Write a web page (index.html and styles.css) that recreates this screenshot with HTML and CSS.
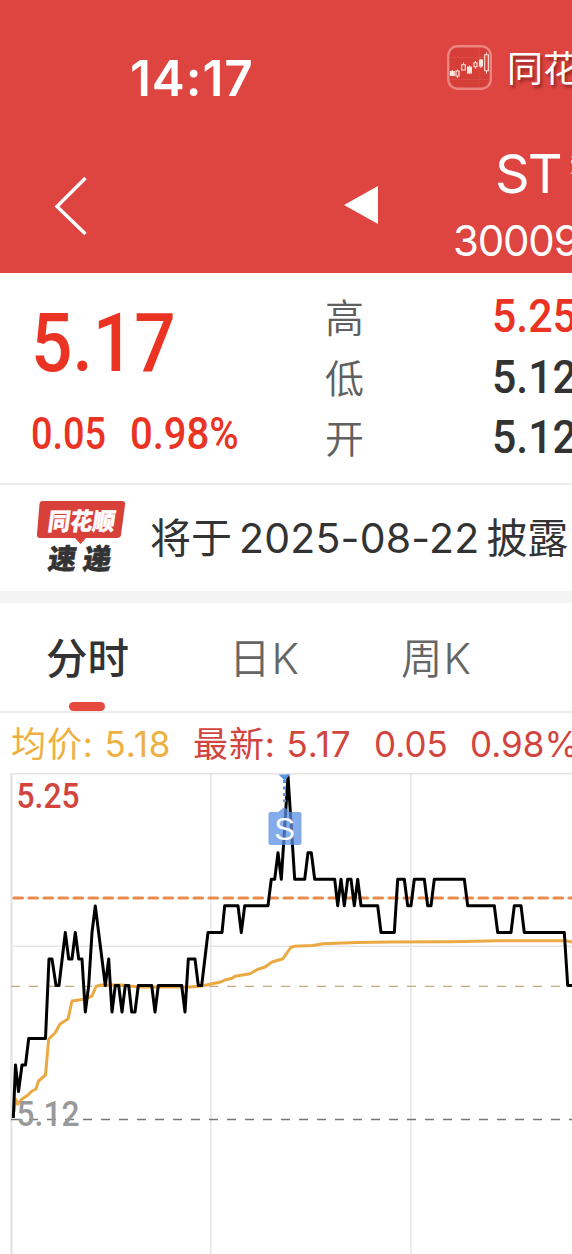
FILE: index.html
```html
<!DOCTYPE html>
<html lang="zh-CN">
<head>
    <meta charset="UTF-8">
    <meta name="viewport" content="width=device-width, initial-scale=1.0">
    <title>ST 30009</title>
    <link rel="stylesheet" href="styles.css">
</head>
<body>
    <header class="header">
        <div class="status-bar">
            <span class="time">14:17</span>
            <svg class="app-icon" width="45" height="45" viewBox="0 0 45 45">
                <rect x="1.2" y="1.2" width="42.6" height="42.6" rx="9.5" fill="#d63f38" stroke="#ec8580" stroke-width="2.4"/>
                <path d="M3 12.500H42M3 34.500H42M32 3V42" stroke="#dc524b" stroke-width="0.700"/>
                <g fill="#fbe9e0">
                    <rect x="2.800" y="26" width="5" height="5"/>
                    <rect x="20" y="21.500" width="5" height="7"/>
                    <rect x="32" y="14.500" width="4" height="7"/>
                </g>
                <path d="M5.300 25v6M22.500 20.500v8M34 14v9M10.500 24.500v1.500M10.500 31v2M16.500 17.500v2M28.500 16v1.500M28.500 22v2M39.500 7.500v2M39.500 26v2.500" stroke="#fbe9e0" stroke-width="1"/>
                <path d="M9 26h3v5h-3zM14.700 19.700h3.600v5.300h-3.600zM27 17.700h3v4h-3zM37.700 9.700h3.600v16h-3.600z" fill="none" stroke="#fbe9e0" stroke-width="1.100"/>
            </svg>
            <span class="app-name">同花</span>
        </div>
        <div class="nav-bar">
            <svg class="back" width="36" height="62" viewBox="0 0 36 62">
                <path d="M32.500 3L4 31.500L32.500 59" fill="none" stroke="#fff" stroke-width="3.400"/>
            </svg>
            <svg class="prev" width="34" height="38" viewBox="0 0 34 38">
                <path d="M34 0V38L0 19Z" fill="#fff"/>
            </svg>
            <div class="stock">
                <div class="stock-name">ST<span class="stock-cn">智</span></div>
                <div class="stock-code">30009</div>
            </div>
        </div>
    </header>

    <section class="quote">
        <div class="price">
            <div class="price-now num">5.17</div>
            <div class="price-change"><span class="num">0.05</span><span class="num percent">0.98%</span></div>
        </div>
        <div class="stats">
            <div class="stat"><span class="label">高</span><span class="value num up">5.25</span></div>
            <div class="stat"><span class="label">低</span><span class="value num">5.12</span></div>
            <div class="stat"><span class="label">开</span><span class="value num">5.12</span></div>
        </div>
    </section>

    <section class="news">
        <svg class="news-logo" width="90" height="76" viewBox="36 499 90 76">
            <path d="M42 501H122Q126 501 125 505L121 535Q120.500 538 117 538H86L80.500 544L75 538H40Q36.500 538 37 534L39.500 504Q40 501 42 501Z" fill="#d8413a"/>
            <g font-family="Noto Sans CJK SC" font-weight="900">
                <text transform="translate(47 529.500) skewX(-8)" font-size="24" textLength="67" lengthAdjust="spacingAndGlyphs" fill="#fff" stroke="#fff" stroke-width="0.400">同花顺</text>
                <g fill="#333" stroke="#333" stroke-width="0.600">
                    <text transform="translate(47 569) skewX(-8)" font-size="28" textLength="28" lengthAdjust="spacingAndGlyphs">速</text>
                    <text transform="translate(82 569) skewX(-8)" font-size="28" textLength="28" lengthAdjust="spacingAndGlyphs">递</text>
                </g>
            </g>
        </svg>
        <div class="news-text">将于<span class="date">2025-08-22</span>披露</div>
    </section>

    <nav class="tabs">
        <div class="tab active">分时</div>
        <div class="tab">日<span class="k">K</span></div>
        <div class="tab">周<span class="k">K</span></div>
    </nav>

    <div class="legend">
        <span class="avg">均价: 5.18</span>
        <span class="last">最新: 5.17</span>
        <span class="change">0.05</span>
        <span>0.98%</span>
    </div>

    <svg class="chart" width="572" height="484" viewBox="0 770 572 484">
        <!-- grid -->
        <g stroke="#e6e6e6" fill="none">
            <path d="M11.500 773V1254" stroke-width="2.500"/>
            <path d="M11 773.800H572M11 946.300H572M210.800 773V1254M410.900 773V1254" stroke-width="1.500"/>
        </g>
        <path d="M14 898H572" stroke="#e98b4a" stroke-width="3.200" stroke-dasharray="8.500 6.500" stroke-linecap="round"/>
        <path d="M11 986.400H572" stroke="#c2ab7c" stroke-width="1.400" stroke-dasharray="9 9"/>
        <path d="M11 1119.600H572" stroke="#777" stroke-width="1.500" stroke-dasharray="9 9"/>

        <!-- average price -->
        <polyline fill="none" stroke="#eba943" stroke-width="3" stroke-linejoin="round" points="14,1112 15.500,1099 18,1104 22,1099 28,1095 32,1091 36,1089 38.500,1081 45.500,1075 48.700,1039 55,1033 60,1024 68,1019 72,1001 85,999 92,996 96,986.500 101,985 122,985 138,987 190,987 202,986 211,984 220.700,982 225,980 232,978.300 235,976.300 250,973.700 257,969.700 265,967 272,962 283,958.700 290.700,947.500 294,946.300 313,945.500 323,943.700 357,942.600 390,942 450,941.800 500,940.800 566,940.800 572,942"/>

        <!-- price -->
        <polyline fill="none" stroke="#000" stroke-width="3" stroke-linejoin="round" points="13.3,1118 15.500,1065 18.500,1091.500 22,1065 25.500,1065 28.700,1038.500 45.500,1038.500 49,959 52,959 56,985.500 59,985.500 65.300,932.500 68.700,959 72,959 75.300,932.500 78.700,959 82,959 85.300,1012 88.700,985.500 92,932.500 95.300,906 105.300,985.500 108.700,959 112,1012 115.300,985.500 118.700,985.500 122,1012 125.300,985.500 128.700,985.500 131.700,1012 135,1012 138.300,985.500 151.700,985.500 155,1012 158.300,985.500 181.700,985.500 185,1012 188.300,959 195,959 198.300,985.500 201.700,985.500 208,932.500 222,932.500 224.700,905.700 238,905.700 241.300,932.500 244.700,905.700 268,905.700 271.300,879.300 274.700,879.300 278,852.700 281.300,879.300 288,776 294.700,879.300 304.700,879.300 308,852.700 311.300,852.700 314.700,879.300 334.700,879.300 337.700,905.700 341,879.300 344.300,905.700 347.700,879.300 351,879.300 354.300,905.700 357.700,879.300 361,905.700 377.700,905.700 381,932.500 394.300,932.500 397.700,879.300 404.300,879.300 407.700,905.700 411,905.700 414.300,879.300 424.300,879.300 427.700,905.700 431,905.700 434.300,879.300 464.300,879.300 467.700,905.700 494.300,905.700 497.700,932.500 511,932.500 514.300,905.700 521,905.700 524.300,932.500 564.300,932.500 567.700,985.500 576,985.500"/>

        <!-- sell marker -->
        <g fill="#5b93e2">
            <path d="M278.500 774.500H290.500L284.500 780.500Z"/>
            <path d="M284.500 780V802" stroke="#5b93e2" stroke-width="3" stroke-dasharray="3 3.500"/>
            <path d="M270.500 812H278L284.500 807L290 812H299.500Q301.500 812 301.500 814V843Q301.500 845 299.500 845H270.500Q268.500 845 268.500 843V814Q268.500 812 270.500 812Z" fill="#5b8fe3" fill-opacity="0.750"/>
        </g>
        <text class="marker" x="284.500" y="840" text-anchor="middle">S</text>

        <text class="axis high" x="16.500" y="808" textLength="63" lengthAdjust="spacingAndGlyphs">5.25</text>
        <text class="axis base" x="16.500" y="1126" textLength="63" lengthAdjust="spacingAndGlyphs">5.12</text>
    </svg>
</body>
</html>
```

FILE: styles.css
```css
* {
    box-sizing: border-box;
}
body {
    margin: 0;
    width: 572px;
    height: 1254px;
    overflow: hidden;
    background-color: #fff;
    color: #333;
    font-family: Inter, "Noto Sans CJK SC", sans-serif;
    white-space: nowrap;
}
svg {
    display: block;
    flex: none;
}
.header {
    height: 273px;
    background-color: #de4440;
    color: #fff;
    overflow: hidden;
}
.status-bar {
    display: flex;
    height: 140px;
    padding-top: 45px;
}
.time {
    flex: none;
    width: 447px;
    padding: 3px 0 0 130px;
    font-size: 49.5px;
    line-height: 60px;
    font-weight: 600;
    letter-spacing: 0.9px;
}
.app-name {
    margin-left: 15px;
    font-size: 36px;
    line-height: 48px;
    text-shadow: 2px 3px 3px rgba(90, 20, 20, 0.6);
}
.nav-bar {
    display: flex;
    padding-left: 53px;
}
.back {
    margin-top: 35px;
}
.prev {
    margin: 46px 0 0 255px;
}
.stock {
    margin-left: 75px;
}
.stock-name {
    display: flex;
    padding: 4px 0 0 42px;
    font-size: 54px;
    line-height: 60px;
    letter-spacing: -2px;
}
.stock-cn {
    margin-left: 8px;
}
.stock-code {
    margin-top: 12px;
    font-size: 42px;
    line-height: 50px;
    letter-spacing: -1.2px;
}
.num {
    display: inline-block;
    flex: none;
    font-family: Roboto, sans-serif;
    font-weight: 500;
    transform: scaleX(0.89);
    transform-origin: left;
}
.quote {
    display: flex;
    height: 212px;
    border-bottom: 2px solid #ebebeb;
}
.price {
    flex: none;
    width: 325px;
    padding: 25px 0 0 31px;
    color: #ea3323;
}
.price-now {
    font-size: 82px;
    line-height: 90px;
}
.price-change {
    display: flex;
    margin-top: 20px;
    font-size: 43.5px;
    line-height: 54px;
}
.price-change .num {
    width: 99px;
    transform: scaleX(0.87);
}
.price-change .percent {
    transform: scaleX(0.92);
}
.stats {
    padding-top: 12px;
}
.stat {
    display: flex;
    height: 60.5px;
    line-height: 62px;
}
.label {
    flex: none;
    width: 167px;
    padding-top: 2px;
    font-size: 39px;
    font-weight: 350;
    color: #606060;
}
.value {
    font-size: 47px;
    transform: scaleX(0.91);
}
.up {
    color: #ea3323;
}
.news {
    display: flex;
    height: 118px;
    padding: 14px 0 0 36px;
    border-bottom: 12px solid #f4f4f4;
}
.news-text {
    margin-left: 24px;
    font-size: 41px;
    line-height: 78px;
}
.date {
    margin: 0 7px;
    font-size: 41px;
    letter-spacing: 0.2px;
}
.tabs {
    display: flex;
    height: 110px;
    padding-left: 46px;
    border-bottom: 2px solid #ebebeb;
    font-size: 41.5px;
    line-height: 112px;
    color: #666;
    font-weight: 350;
}
.tab {
    position: relative;
    flex: none;
    height: 108px;
    width: 172px;
}
.k {
    margin-left: 1px;
    font-size: 42.5px;
    font-weight: 300;
}
.tab.active {
    width: 183px;
    color: #333;
    font-weight: 500;
}
.tab.active::after {
    content: "";
    position: absolute;
    left: 23px;
    bottom: 0;
    width: 36px;
    height: 9px;
    border-radius: 4.5px;
    background-color: #e64a3e;
}
.legend {
    display: flex;
    height: 57px;
    padding-left: 11px;
    font-size: 35px;
    line-height: 62px;
    color: #d2443e;
}
.legend span {
    flex: none;
}
.avg {
    width: 182px;
    letter-spacing: 0.9px;
    color: #efb041;
}
.last {
    width: 181px;
    letter-spacing: 0.9px;
}
.change {
    width: 96px;
}
.marker {
    font: 31px "Liberation Sans", sans-serif;
    fill: #fff;
}
.axis {
    font: 500 35px Roboto, sans-serif;
}
.high {
    fill: #d2443e;
}
.base {
    fill: #999;
}
```
